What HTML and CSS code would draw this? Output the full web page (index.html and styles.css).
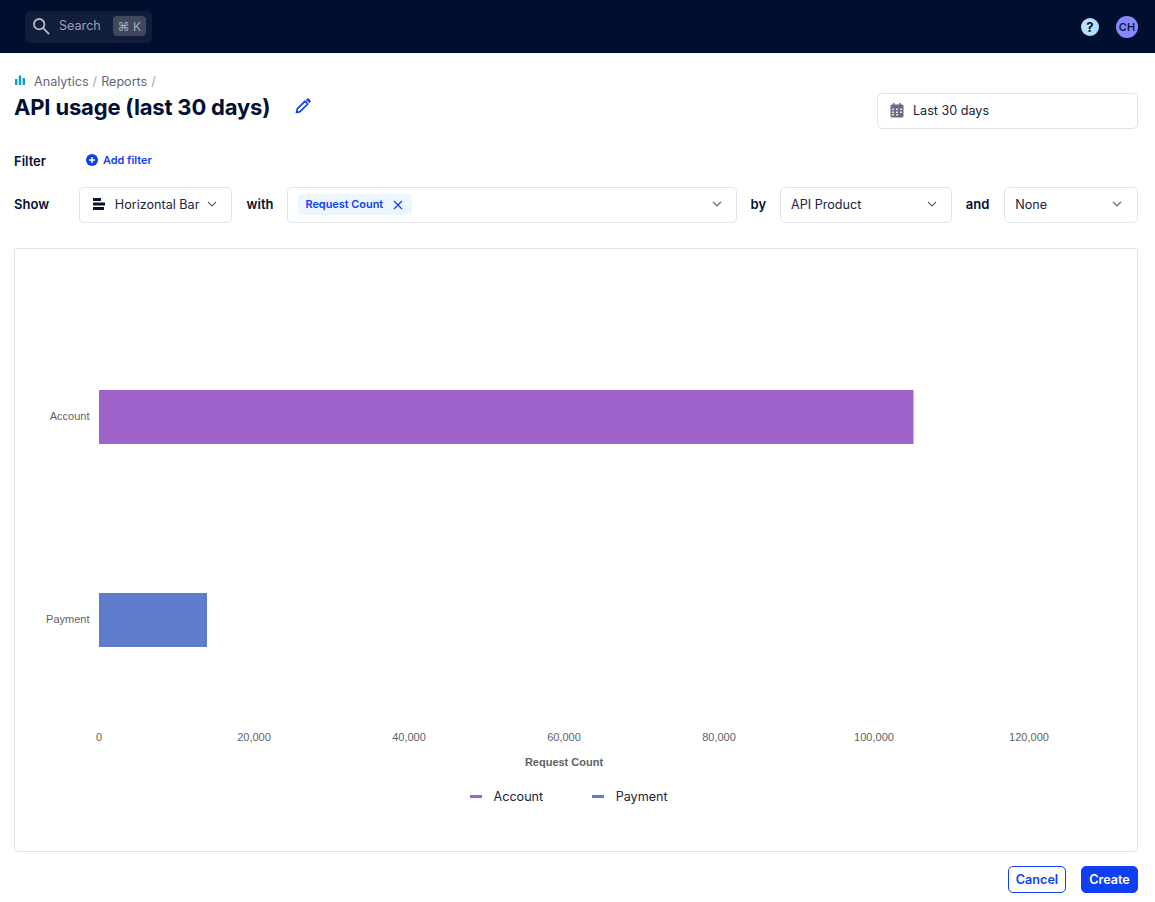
FILE: index.html
```html
<!DOCTYPE html>
<html lang="en">
<head>
  <meta charset="UTF-8" />
  <meta name="viewport" content="width=device-width, initial-scale=1.0" />
  <title>API usage (last 30 days)</title>
  <link rel="stylesheet" href="styles.css">
</head>
<body>
  <header class="topbar">
    <div class="search">
      <svg class="search-icon" width="18" height="18" viewBox="0 0 20 20" fill="none" stroke="#b4bac6" stroke-width="2"><circle cx="8" cy="8" r="5.800"/><path d="M12.200 12.200l6.800 6.800"/></svg>
      <span class="search-text">Search</span>
      <span class="kbd">⌘ K</span>
    </div>
    <div class="topbar-right">
      <span class="help">?</span>
      <span class="avatar">CH</span>
    </div>
  </header>

  <main class="page">
    <div class="head">
      <div>
        <div class="crumbs">
          <svg class="crumb-icon" width="10" height="10" viewBox="0 0 10 10" fill="#0e9ec9"><rect x="0" y="4" width="2.400" height="6"/><rect x="3.800" y="0.500" width="2.400" height="9.500"/><rect x="7.600" y="3" width="2.400" height="7"/></svg>
          <span>Analytics</span><span class="sep">/</span><span>Reports</span><span class="sep">/</span>
        </div>
        <div class="title-row">
          <h1>API usage (last 30 days)</h1>
          <svg width="16" height="16" viewBox="0 0 16 16" fill="none" stroke="#0f3ff0" stroke-width="1.700" stroke-linejoin="round"><path d="M1.500 14.500l.8-3.600 7.700-7.700 2.800 2.800-7.700 7.700z"/><path d="M11.400 1.800l.8-.8a1 1 0 0 1 1.400 0l1.400 1.400a1 1 0 0 1 0 1.400l-.8.8z" fill="#0f3ff0" stroke-width="1"/></svg>
        </div>
      </div>
      <div class="control date">
        <svg width="16" height="16" viewBox="0 0 16 16"><path d="M1.500 4a1.500 1.500 0 0 1 1.500-1.500h10A1.500 1.500 0 0 1 14.500 4v10a1.500 1.500 0 0 1-1.500 1.500H3A1.500 1.500 0 0 1 1.500 14z" fill="#666e80"/><rect x="4" y="1" width="1.500" height="3" fill="#666e80"/><rect x="10.500" y="1" width="1.500" height="3" fill="#666e80"/><path d="M3 6.500h2v1.600H3zM7 6.500h2v1.600H7zM11 6.500h2v1.600h-2zM3 9.500h2v1.600H3zM7 9.500h2v1.600H7zM11 9.500h2v1.600h-2zM3 12h2v1.600H3zM7 12h2v1.600H7z" fill="#e6e8ee"/></svg>
        <span>Last 30 days</span>
      </div>
    </div>

    <div class="filter-row">
      <span class="label filter-label">Filter</span>
      <a class="add-filter">
        <svg width="12" height="12" viewBox="0 0 12 12"><circle cx="6" cy="6" r="6" fill="#0f3ff0"/><path d="M6 3v6M3 6h6" stroke="#fff" stroke-width="1.500"/></svg>
        Add filter
      </a>
    </div>

    <div class="show-row">
      <span class="label show-label">Show</span>
      <div class="control sel-type">
        <svg class="bar-icon" width="12" height="12" viewBox="0 0 12 12" fill="#0a1230"><rect x="0" y="0" width="8" height="3"/><rect x="0" y="4.500" width="12" height="3"/><rect x="0" y="9" width="11" height="3"/></svg>
        <span>Horizontal Bar</span>
        <svg class="chev" width="10" height="6" viewBox="0 0 10 6" fill="none" stroke="#5f6779" stroke-width="1.200"><path d="M1 1l4 4 4-4"/></svg>
      </div>
      <span class="label">with</span>
      <div class="control sel-metric">
        <span class="tag">Request Count
          <svg width="10" height="10" viewBox="0 0 10 10" stroke="#0f3ff0" stroke-width="1.200"><path d="M1 1l8 8M9 1l-8 8"/></svg>
        </span>
        <svg class="chev" width="10" height="6" viewBox="0 0 10 6" fill="none" stroke="#5f6779" stroke-width="1.200"><path d="M1 1l4 4 4-4"/></svg>
      </div>
      <span class="label">by</span>
      <div class="control sel-by">
        <span>API Product</span>
        <svg class="chev" width="10" height="6" viewBox="0 0 10 6" fill="none" stroke="#5f6779" stroke-width="1.200"><path d="M1 1l4 4 4-4"/></svg>
      </div>
      <span class="label">and</span>
      <div class="control sel-and">
        <span>None</span>
        <svg class="chev" width="10" height="6" viewBox="0 0 10 6" fill="none" stroke="#5f6779" stroke-width="1.200"><path d="M1 1l4 4 4-4"/></svg>
      </div>
    </div>

    <section class="chart">
      <svg class="plot" width="1122" height="602" viewBox="0 0 1122 602">
        <rect x="84" y="141" width="814.500" height="54" fill="#9f63cc"/>
        <rect x="84" y="344" width="108" height="54" fill="#5f7bcc"/>
        <g class="tick" text-anchor="end">
          <text x="74.500" y="171">Account</text>
          <text x="74.500" y="374">Payment</text>
        </g>
        <g class="tick" text-anchor="middle">
          <text x="84" y="492">0</text>
          <text x="239" y="492">20,000</text>
          <text x="394" y="492">40,000</text>
          <text x="549" y="492">60,000</text>
          <text x="704" y="492">80,000</text>
          <text x="859" y="492">100,000</text>
          <text x="1014" y="492">120,000</text>
        </g>
        <text class="axis-title" x="549" y="517" text-anchor="middle">Request Count</text>
      </svg>
      <div class="legend">
        <span class="legend-item"><i class="swatch swatch-account"></i>Account</span>
        <span class="legend-item"><i class="swatch swatch-payment"></i>Payment</span>
      </div>
    </section>

    <div class="actions">
      <button class="btn btn-outline">Cancel</button>
      <button class="btn btn-solid">Create</button>
    </div>
  </main>
</body>
</html>
```

FILE: styles.css
```css
* { box-sizing: border-box; }

body {
  margin: 0;
  font-family: Inter, "Liberation Sans", sans-serif;
  color: #000f33;
  background: #fff;
}

.topbar {
  height: 53px;
  background: #000f2e;
  display: flex;
  align-items: center;
  justify-content: space-between;
  padding: 0 17px 0 25px;
}

.search {
  width: 127px;
  height: 32px;
  background: #111d3b;
  border-radius: 6px;
  display: flex;
  align-items: center;
  padding: 0 0 1px 7px;
}
.search-icon { margin-right: 9px; }
.search-text { font-size: 12.600px; color: #9aa2b3; margin-right: 12px; padding-bottom: 1px; }
.kbd {
  font-size: 12px;
  color: #a5abb9;
  background: #40485f;
  border-radius: 4px;
  width: 33px;
  height: 20px;
  display: flex;
  align-items: center;
  justify-content: center;
}

.topbar-right { display: flex; align-items: center; gap: 17px; }
.help {
  width: 18px;
  height: 18px;
  border-radius: 50%;
  background: #b8dfff;
  color: #000f2e;
  font-size: 13px;
  font-weight: 700;
  display: flex;
  align-items: center;
  justify-content: center;
}
.avatar {
  width: 22px;
  height: 22px;
  border-radius: 50%;
  background: #8588ff;
  color: #10173d;
  font-size: 11px;
  font-weight: 600;
  display: flex;
  align-items: center;
  justify-content: center;
}

.page { padding: 0 17px 0 14px; }

.head {
  display: flex;
  justify-content: space-between;
  align-items: flex-start;
}

.crumbs {
  display: flex;
  align-items: center;
  margin-top: 20px;
  height: 16px;
  font-size: 12.600px;
  color: #5f6779;
}
.crumb-icon { margin: -2px 9px 0 1px; }
.sep { color: #9aa2b3; margin: 0 4px; }

.title-row { display: flex; align-items: center; margin-top: 3px; height: 30px; }
.title-row svg { margin-left: 25px; margin-top: -2px; }

h1 {
  margin: 0;
  font-size: 22px;
  font-weight: 700;
  line-height: 30px;
  letter-spacing: -0.170px;
  color: #000f33;
}

.control {
  height: 36px;
  border: 1px solid #e0e2ea;
  border-radius: 5px;
  display: flex;
  align-items: center;
  font-size: 12.600px;
  color: #1a2340;
  background: #fff;
  padding-bottom: 2px;
}

.date {
  width: 261px;
  margin-top: 40px;
  padding-left: 11px;
  gap: 8px;
}

.filter-row {
  display: flex;
  align-items: center;
  margin-top: 22px;
  height: 20px;
}
.label { font-size: 13px; font-weight: 600; color: #000f33; }
.filter-label { width: 72px; }
.add-filter {
  display: flex;
  align-items: center;
  gap: 5px;
  font-size: 10.900px;
  font-weight: 600;
  color: #0f3ff0;
  margin-top: -2px;
}

.show-row {
  display: flex;
  align-items: center;
  margin-top: 16px;
}
.show-row .label { padding-bottom: 2px; }
.show-label { width: 65px; }
.sel-type { width: 153px; margin-right: 15px; padding-left: 13px; }
.bar-icon { margin-right: 10px; margin-top: -1px; }
.sel-type .chev { margin-left: auto; margin-right: 14px; }
.sel-metric { width: 450px; margin-left: 14px; margin-right: 14px; padding-left: 10px; }
.sel-metric .chev { margin-left: auto; margin-right: 14px; }
.sel-by { width: 172px; margin-left: 14px; margin-right: 14px; padding-left: 10px; }
.sel-by .chev { margin-left: auto; margin-right: 14px; }
.sel-and { width: 134px; margin-left: 15px; padding-left: 10px; }
.sel-and .chev { margin-left: auto; margin-right: 15px; }

.tag {
  height: 21px;
  background: #ebf6ff;
  color: #0f3ff0;
  border-radius: 4px;
  font-size: 10.900px;
  font-weight: 600;
  display: flex;
  align-items: center;
  gap: 9.500px;
  padding: 0 9px 2px 7px;
  margin-top: 1px;
}
.tag svg { margin-top: 2px; }

.chart {
  margin-top: 25px;
  height: 604px;
  border: 1px solid #e0e2ea;
  border-radius: 3px;
  position: relative;
}
.plot { display: block; }
.tick { font-family: "Liberation Sans", sans-serif; font-size: 11px; fill: #5f5f5f; }
.axis-title { font-family: "Liberation Sans", sans-serif; font-size: 11px; font-weight: 700; fill: #5f5f5f; }

.legend {
  position: absolute;
  left: 455px;
  top: 539px;
  display: flex;
  gap: 49px;
  font-size: 12.600px;
  color: #1a2340;
}
.legend-item { display: flex; align-items: center; line-height: 17px; }
.swatch { width: 12px; height: 3px; margin-right: 11.500px; }
.swatch-account { background: #9f63cc; }
.swatch-payment { background: #5f7bcc; }

.actions {
  display: flex;
  justify-content: flex-end;
  gap: 15px;
  margin-top: 14px;
}
.btn {
  height: 27px;
  border-radius: 5px;
  font-family: inherit;
  font-size: 12.600px;
  font-weight: 600;
  padding: 0 0 1px;
}
.btn-outline { width: 58px; background: #fff; color: #0f3ff0; border: 1px solid #0f3ff0; }
.btn-solid { width: 57px; background: #0f3ff0; color: #fff; border: 1px solid #0f3ff0; }
```
